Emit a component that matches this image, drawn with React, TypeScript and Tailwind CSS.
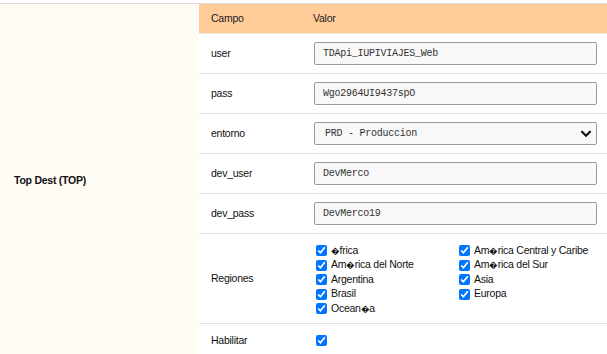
import React from "react";

function Bad() {
  return <span className="text-[8.5px] tracking-[-0.5px]">{"\uFFFD"}</span>;
}

function Chevron() {
  return (
    <svg width="10" height="7" viewBox="0 0 10 7" className="pointer-events-none absolute right-[6px] top-1/2 -translate-y-1/2">
      <path d="M1 1.2 L5 5.2 L9 1.2" fill="none" stroke="#111" strokeWidth="2.2" strokeLinecap="square" />
    </svg>
  );
}

function Row({ label, children, h = "h-[40px]" }: { label: string; children: React.ReactNode; h?: string }) {
  return (
    <div className={`flex items-center border-b border-[#e4e0da] ${h}`}>
      <div className="w-[104px] shrink-0 pl-[12px] text-[#111]">{label}</div>
      <div className="flex-1 pl-[11px] pr-[10px]">{children}</div>
    </div>
  );
}

function TextInput({ value }: { value: string }) {
  return (
    <input
      readOnly
      value={value}
      className="block h-[23px] w-full rounded-[2px] border border-[#9a9a9a] bg-[#f8f8f8] pl-[8px] text-[10px] text-[#333] outline-none"
      style={{ fontFamily: '"Liberation Mono", monospace' }}
    />
  );
}

function Check({ children }: { children?: React.ReactNode }) {
  return (
    <label className="flex h-[14.5px] items-center gap-[4px] text-[#111]">
      <input type="checkbox" defaultChecked className="m-0 h-[11px] w-[11px] shrink-0 accent-[#0075ff]" />
      {children !== undefined && <span>{children}</span>}
    </label>
  );
}

export default function App() {
  const col1: React.ReactNode[] = [
    <><Bad />frica</>,
    <>Am<Bad />rica del Norte</>,
    "Argentina",
    "Brasil",
    <>Ocean<Bad />a</>,
  ];
  const col2: React.ReactNode[] = [
    <>Am<Bad />rica Central y Caribe</>,
    <>Am<Bad />rica del Sur</>,
    "Asia",
    "Europa",
  ];
  return (
    <div
      className="min-h-[354px] w-[607px] bg-white pt-[3px] text-[10.5px] tracking-[-0.25px]"
      style={{ fontFamily: '"Liberation Sans", Arial, sans-serif' }}
    >
      <div className="flex border-t border-[#dedad4]">
        <div className="flex w-[199px] shrink-0 items-center border-r border-white bg-[#fffbf5] pl-[14px] font-bold text-[#111]">
          Top Dest (TOP)
        </div>
        <div className="flex-1 bg-white">
          <div className="flex h-[30px] items-center border-b border-[#f3ede6] bg-[#ffcc99] text-[#222]">
            <div className="w-[104px] shrink-0 pl-[12px]">Campo</div>
            <div className="flex-1 pl-[10px]">Valor</div>
          </div>
          <Row label="user">
            <TextInput value="TDApi_IUPIVIAJES_Web" />
          </Row>
          <Row label="pass">
            <TextInput value="Wgo2964UI9437spO" />
          </Row>
          <Row label="entorno">
            <div className="relative">
              <select
                className="block h-[23px] w-full appearance-none rounded-[2px] border border-[#9a9a9a] bg-[#f8f8f8] pl-[10px] text-[10px] text-[#333] outline-none"
                style={{ fontFamily: '"Liberation Mono", monospace' }}
                defaultValue="PRD"
              >
                <option value="PRD">PRD - Produccion</option>
              </select>
              <Chevron />
            </div>
          </Row>
          <Row label="dev_user">
            <TextInput value="DevMerco" />
          </Row>
          <Row label="dev_pass">
            <TextInput value="DevMerco19" />
          </Row>
          <Row label="Regiones" h="h-[90px]">
            <div className="flex pl-[2px] pt-[2px]">
              <div className="w-[143px] shrink-0">
                {col1.map((c, i) => (
                  <Check key={i}>{c}</Check>
                ))}
              </div>
              <div className="flex-1">
                {col2.map((c, i) => (
                  <Check key={i}>{c}</Check>
                ))}
              </div>
            </div>
          </Row>
          <div className="flex h-[33px] items-center">
            <div className="w-[104px] shrink-0 pl-[12px] text-[#111]">Habilitar</div>
            <div className="flex-1 pl-[13px]">
              <Check />
            </div>
          </div>
        </div>
      </div>
    </div>
  );
}
